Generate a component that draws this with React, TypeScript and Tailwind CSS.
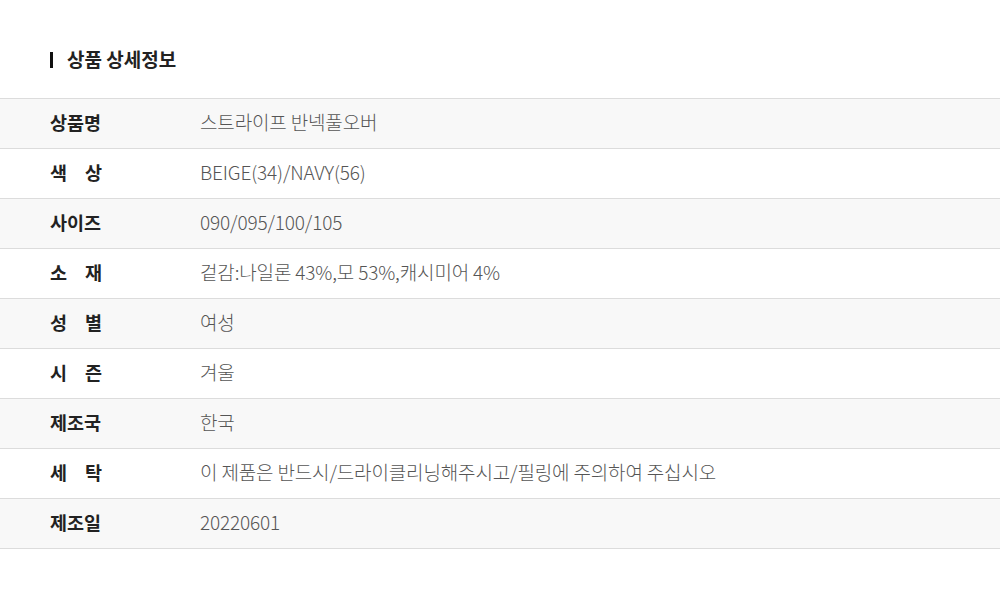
import React from "react";

const rows: { label: string[]; value: string }[] = [
  { label: ["상품명"], value: "스트라이프 반넥풀오버" },
  { label: ["색", "상"], value: "BEIGE(34)/NAVY(56)" },
  { label: ["사이즈"], value: "090/095/100/105" },
  { label: ["소", "재"], value: "겉감:나일론 43%,모 53%,캐시미어 4%" },
  { label: ["성", "별"], value: "여성" },
  { label: ["시", "즌"], value: "겨울" },
  { label: ["제조국"], value: "한국" },
  { label: ["세", "탁"], value: "이 제품은 반드시/드라이클리닝해주시고/필링에 주의하여 주십시오" },
  { label: ["제조일"], value: "20220601" },
];

export default function App() {
  return (
    <div
      className="w-[1000px] h-[598px] bg-white"
      style={{ fontFamily: '"Noto Sans CJK KR", "Noto Sans", sans-serif' }}
    >
      <div className="pt-[47px] pl-[50px] h-[98px]">
        <div className="flex items-center h-[24px]">
          <div className="w-[3px] h-[16px] bg-[#111] mt-[2px]" />
          <h2 className="ml-[14px] text-[19px] font-bold text-[#222] leading-[24px]">상품 상세정보</h2>
        </div>
      </div>
      <div className="border-t border-[#dcdcdc]">
        {rows.map((r, i) => (
          <div
            key={i}
            className={`flex items-center h-[50px] pb-[3px] border-b border-[#dcdcdc] ${i % 2 === 0 ? "bg-[#f8f8f8]" : "bg-white"}`}
          >
            <div className="w-[200px] pl-[50px] shrink-0">
              <div
                className={`flex w-[52px] whitespace-nowrap text-[18.5px] font-bold text-[#222] leading-[24px] ${r.label.length > 1 ? "justify-between" : ""}`}
              >
                {r.label.map((l, j) => (
                  <span key={j}>{l}</span>
                ))}
              </div>
            </div>
            <div className="text-[19px] font-light text-[#555] leading-[24px] tracking-[-0.15px]">{r.value}</div>
          </div>
        ))}
      </div>
    </div>
  );
}
